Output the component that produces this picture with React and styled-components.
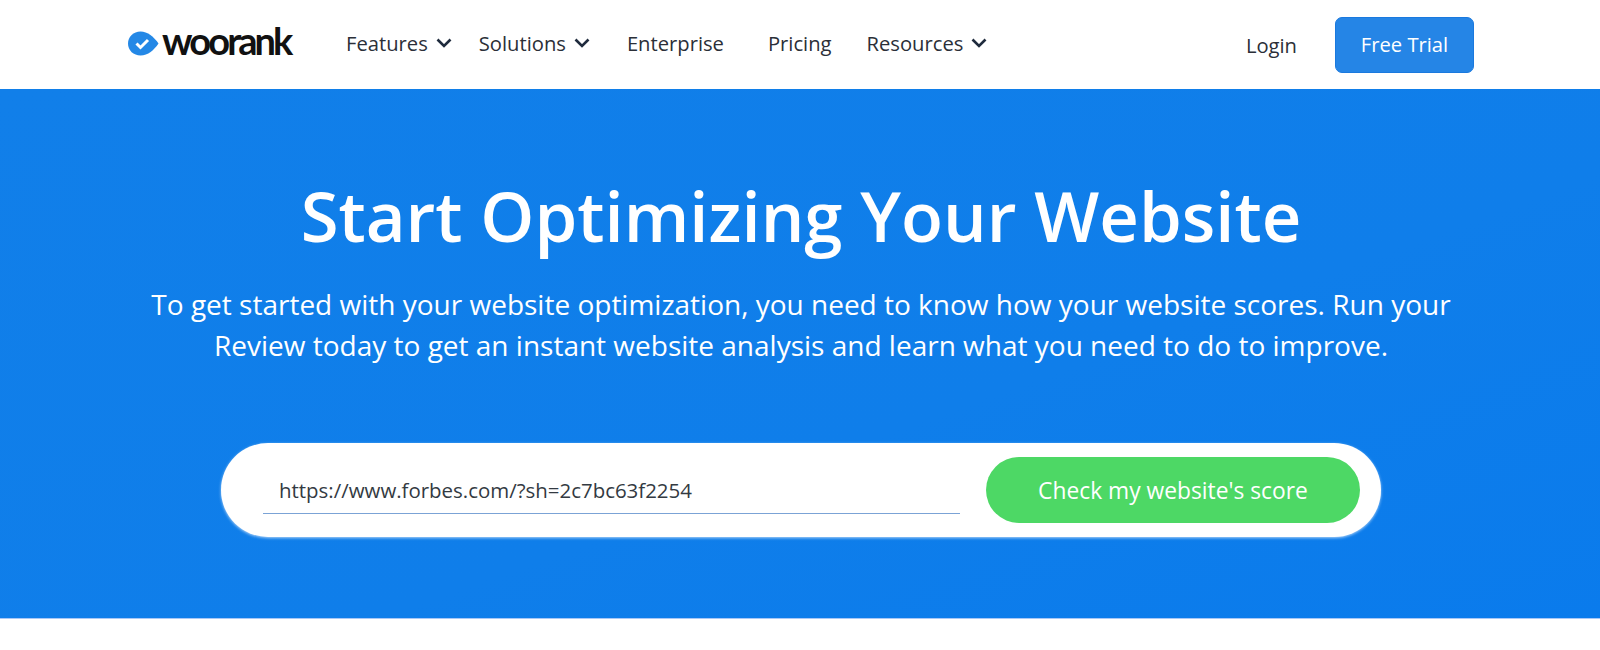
import React from 'react';
import styled, { createGlobalStyle } from 'styled-components';

const GlobalStyle = createGlobalStyle`
  html, body {
    margin: 0;
    padding: 0;
    background: #ffffff;
    font-family: "Open Sans", "Liberation Sans", sans-serif;
  }
`;

const Header = styled.header`
  height: 89px;
  display: flex;
  align-items: center;
  padding: 0 126px 0 128px;
  background: #ffffff;
`;

const Logo = styled.a`
  width: 218px;
  display: flex;
  align-items: center;
  gap: 3px;
  margin-top: -2px;
`;

const LogoText = styled.span`
  margin-bottom: 8px;
  font-family: "Lato", sans-serif;
  font-size: 38px;
  line-height: 40px;
  font-weight: 700;
  letter-spacing: -2.9px;
  color: #111111;
`;

const Nav = styled.nav`
  display: flex;
  align-items: center;
  flex: 1;
  margin-top: -4px;
`;

const NavLink = styled.a`
  display: flex;
  align-items: center;
  gap: 8px;
  margin-right: ${(p) => p.$gap}px;
  font-size: 20.2px;
  line-height: 28px;
  color: #2b2f38;
`;

const Login = styled.a`
  margin-right: 38px;
  font-size: 20.2px;
  color: #2b2f38;
`;

const TrialButton = styled.button`
  width: 139px;
  height: 56px;
  padding: 0 0 2px;
  border: 1px solid #1a79de;
  border-radius: 7px;
  background: #2585e6;
  color: #ffffff;
  font-family: inherit;
  font-size: 20.2px;
  font-weight: 500;
`;

const Hero = styled.section`
  height: 529px;
  display: flex;
  flex-direction: column;
  align-items: center;
  padding-left: 2px;
  border-bottom: 1px solid #a9c8f7;
  box-sizing: content-box;
  background: linear-gradient(160deg, #117fe9 0%, #0f7eea 60%, #0a7bec 100%);
  color: #ffffff;
  text-align: center;
`;

const Title = styled.h1`
  margin: 83px 0 0;
  font-size: 68.8px;
  line-height: 86px;
  font-weight: 600;
`;

const Lead = styled.p`
  width: 1340px;
  margin: 26px 0 0;
  font-size: 28px;
  line-height: 41px;
  font-weight: 400;
`;

const SearchPill = styled.form`
  width: 1160px;
  height: 94px;
  margin-top: 77px;
  padding: 14px 21px 14px 42px;
  box-sizing: border-box;
  display: flex;
  align-items: flex-start;
  justify-content: space-between;
  background: #ffffff;
  border-radius: 47px;
  box-shadow: 0 1px 3px rgba(215, 232, 252, 0.8);
`;

const UrlField = styled.div`
  width: 697px;
  height: 57px;
  padding: 10px 0 0 16px;
  box-sizing: border-box;
  border-bottom: 1px solid #7ba3d6;
  color: #333a42;
  font-size: 20.45px;
  line-height: 46px;
  text-align: left;
`;

const ScoreButton = styled.button`
  width: 374px;
  height: 66px;
  border: none;
  border-radius: 33px;
  background: #4dd865;
  color: #ffffff;
  font-family: inherit;
  font-size: 22.8px;
  font-weight: 500;
`;

const Chevron = () => (
  <svg width="16" height="10" viewBox="0 0 16 10" fill="none" stroke="#1f2b3d" strokeWidth="2.6">
    <path d="M1.5 1.5 L8 8 L14.5 1.5" />
  </svg>
);

const LogoMark = () => (
  <svg width="31" height="25" viewBox="0 0 31 25">
    <path d="M0 12.5 C0 5.5 5.5 0.5 12.5 0.5 C19.5 0.5 26 6 30.5 12.5 C26 19 20 24.5 12.5 24.5 C5.5 24.5 0 19.5 0 12.5 Z" fill="#2488e6" />
    <path d="M8.5 12.5 L12.5 16.5 L20 9" fill="none" stroke="#ffffff" strokeWidth="3" />
  </svg>
);

const navItems = [
  { label: 'Features', gap: 27, menu: true },
  { label: 'Solutions', gap: 37, menu: true },
  { label: 'Enterprise', gap: 44 },
  { label: 'Pricing', gap: 35 },
  { label: 'Resources', gap: 0, menu: true },
];

const App = () => (
  <>
    <GlobalStyle />
    <Header>
      <Logo>
        <LogoMark />
        <LogoText>woorank</LogoText>
      </Logo>
      <Nav>
        {navItems.map((item) => (
          <NavLink key={item.label} $gap={item.gap}>
            {item.label}
            {item.menu && <Chevron />}
          </NavLink>
        ))}
      </Nav>
      <Login>Login</Login>
      <TrialButton>Free Trial</TrialButton>
    </Header>
    <Hero>
      <Title>Start Optimizing Your Website</Title>
      <Lead>
        To get started with your website optimization, you need to know how your website scores. Run your
        Review today to get an instant website analysis and learn what you need to do to improve.
      </Lead>
      <SearchPill>
        <UrlField>https://www.forbes.com/?sh=2c7bc63f2254</UrlField>
        <ScoreButton>Check my website's score</ScoreButton>
      </SearchPill>
    </Hero>
  </>
);

export default App;
